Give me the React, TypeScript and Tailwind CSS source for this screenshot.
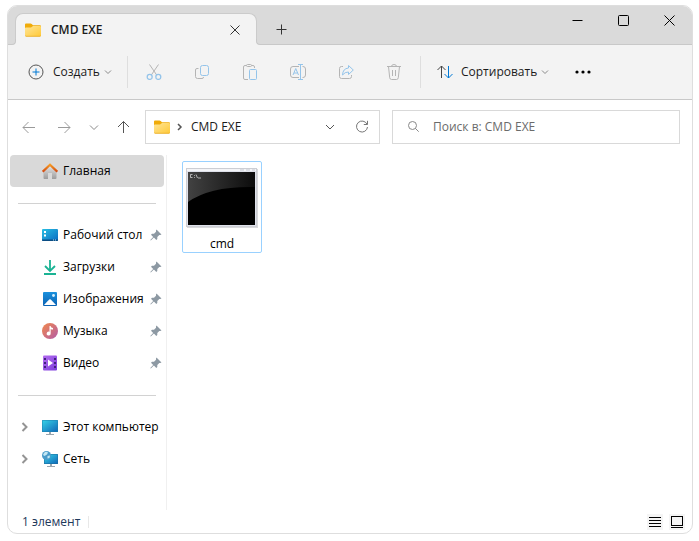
import { ReactNode } from "react"

const font = "font-['Open_Sans','Noto_Sans',sans-serif]"

function Folder() {
  return (
    <svg width="16" height="14" viewBox="0 0 16 14" className="shrink-0">
      <defs>
        <linearGradient id="folder" x1="0" y1="0" x2="1" y2="1">
          <stop offset="0" stopColor="#ffe597" />
          <stop offset="1" stopColor="#ffc937" />
        </linearGradient>
      </defs>
      <path d="M0 1.500Q0 .5 1 .5H5.500Q6.200 .5 6.700 1L8 2.200H15Q16 2.200 16 3.200V6H0Z" fill="#f0ab09" />
      <path d="M0 5Q0 4.500 1 4.500H6L8 3H15Q16 3 16 4V12.500Q16 13.500 15 13.500H1Q0 13.500 0 12.500Z" fill="url(#folder)" />
      <path d="M.3 12.700Q.6 13.300 1.200 13.300H14.800Q15.500 13.300 15.700 12.700" fill="none" stroke="#e5a315" strokeWidth="0.7" />
    </svg>
  )
}

type IconProps = { children: ReactNode; size?: number; color?: string; width?: number }

function Line({ children, size = 16, color = "#b4b4b4", width = 1 }: IconProps) {
  return (
    <svg width={size} height={size} viewBox={`0 0 ${size} ${size}`} fill="none" stroke={color} strokeWidth={width} className="shrink-0">
      {children}
    </svg>
  )
}

function Chevron({ color = "#8a8a8a" }: { color?: string }) {
  return <Line size={8} color={color}><path d="M1 2.500L4 5.500L7 2.500" /></Line>
}

const actions = [
  {
    name: "Вырезать",
    icon: <>
      <path d="M3.500 .5L10.700 11M12.500 .5L5.300 11" />
      <g stroke="#94c4ea" strokeWidth="1.3"><circle cx="3.700" cy="12.900" r="2.500" /><circle cx="12.300" cy="12.900" r="2.500" /></g>
    </>,
  },
  {
    name: "Копировать",
    icon: <>
      <path d="M4.500 4.500H3Q1.500 4.500 1.500 6V12.500Q1.500 14.500 3.500 14.500H8Q9.500 14.500 9.500 13" />
      <rect x="6.500" y="1.500" width="8" height="10" rx="2" stroke="#94c4ea" />
    </>,
  },
  {
    name: "Вставить",
    icon: <>
      <path d="M6 15.500H3Q1.500 15.500 1.500 14V3Q1.500 1.500 3 1.500H4.500M9.500 1.500H11Q12.500 1.500 12.500 3V4" />
      <rect x="4.500" y=".5" width="5" height="2" rx="1" />
      <rect x="7.500" y="5.500" width="7" height="10" rx="1" stroke="#94c4ea" />
    </>,
  },
  {
    name: "Переименовать",
    icon: <>
      <path d="M9 2.500H3Q.5 2.500 .5 5V11Q.5 13.500 3 13.500H9M12.500 2.500H13Q15.500 2.500 15.500 5V11Q15.500 13.500 13 13.500H12.500" />
      <g stroke="#94c4ea"><path d="M3 11L5.750 4.500L8.500 11M4 9H7.500" /><path d="M8 .5H13M8 15.500H13M10.500 .5V15.500" /></g>
    </>,
  },
  {
    name: "Поделиться",
    icon: <>
      <path d="M5 2.500H3.500Q1.500 2.500 1.500 4.500V12.500Q1.500 14.500 3.500 14.500H11.500Q13.500 14.500 13.500 12.500V11" />
      <path d="M10.500 1.500L15.300 6L10.500 10.500V8Q7 7.800 4.500 11Q4.800 4.500 10.500 4Z" stroke="#94c4ea" strokeLinejoin="round" />
    </>,
  },
  {
    name: "Удалить",
    icon: <>
      <path d="M1 2.500H15M5.500 2.500Q5.500 .5 8 .5Q10.500 .5 10.500 2.500M2.500 2.500L3.700 13.700Q3.900 15.500 5.500 15.500H10.500Q12.100 15.500 12.300 13.700L13.500 2.500" />
      <path d="M6.500 6V12M9.500 6V12" />
    </>,
  },
]

const pinned = [
  {
    name: "Рабочий стол",
    icon: <>
      <defs>
        <linearGradient id="desk" x1="0" y1="0" x2="1" y2="1">
          <stop offset="0" stopColor="#28bfe3" />
          <stop offset="1" stopColor="#0c6bc2" />
        </linearGradient>
      </defs>
      <rect y="2" width="16" height="12" rx="1" fill="url(#desk)" />
      <path d="M0 12.500H16V13Q16 14 15 14H1Q0 14 0 13Z" fill="#0b4d83" />
      <path d="M2 4H4V6H2ZM2 7.500H4V9.500H2Z" fill="#fff" />
      <path d="M11 12.500H12V13.500H11ZM13 12.500H14V13.500H13Z" fill="#b7e4f7" />
    </>,
  },
  {
    name: "Загрузки",
    icon: <path d="M8 1V12M3 7L8 12L13 7M2 15H14" fill="none" stroke="#1bb394" strokeWidth="1.8" />,
  },
  {
    name: "Изображения",
    icon: <>
      <defs>
        <linearGradient id="pic" x1="0" y1="0" x2="0" y2="1">
          <stop offset="0" stopColor="#1b91dd" />
          <stop offset="1" stopColor="#0b62b3" />
        </linearGradient>
      </defs>
      <rect x="1" y="1" width="14" height="14" rx="1" fill="url(#pic)" />
      <path d="M2 14L7.200 8.500Q8 7.800 8.800 8.500L14 14Z" fill="#fff" />
      <circle cx="11.500" cy="4.500" r="1.400" fill="#d9f2ff" />
    </>,
  },
  {
    name: "Музыка",
    icon: <>
      <defs>
        <linearGradient id="music" x1="0" y1="0" x2="1" y2="1">
          <stop offset="0" stopColor="#f2894b" />
          <stop offset="1" stopColor="#b25ba8" />
        </linearGradient>
      </defs>
      <circle cx="8" cy="8" r="8" fill="url(#music)" />
      <path d="M7.500 3H8.500Q9 5 11 5V6.600Q9.500 6.600 8.700 5.900V10.500A2 2 0 1 1 7.500 8.700Z" fill="#fff" />
    </>,
  },
  {
    name: "Видео",
    icon: <>
      <defs>
        <linearGradient id="video" x1="0" y1="0" x2="1" y2="1">
          <stop offset="0" stopColor="#b56df0" />
          <stop offset="1" stopColor="#7b3ddb" />
        </linearGradient>
      </defs>
      <rect x="1" y="0.500" width="14" height="15" rx="1" fill="url(#video)" />
      <path d="M2 3H4V5H2ZM2 7H4V9H2ZM2 11H4V13H2ZM12 3H14V5H12ZM12 7H14V9H12ZM12 11H14V13H12Z" fill="#41217f" />
      <path d="M6 4.500L11 8L6 11.500Z" fill="#fff" />
    </>,
  },
]

const places = [
  {
    name: "Этот компьютер",
    icon: <>
      <defs>
        <linearGradient id="screen" x1="0" y1="0" x2="1" y2="1">
          <stop offset="0" stopColor="#35d2e6" />
          <stop offset="1" stopColor="#1168b8" />
        </linearGradient>
      </defs>
      <rect y="1" width="16" height="12" rx="0.500" fill="#1b7fae" />
      <rect x="0.500" y="1.500" width="15" height="11" fill="url(#screen)" />
      <path d="M7 13H9V15H12V16H4V15H7Z" fill="#9aa5ae" />
    </>,
  },
  {
    name: "Сеть",
    icon: <>
      <rect x="2" y="3" width="14" height="10" rx="0.500" fill="#1b6b9c" />
      <rect x="2.500" y="3.500" width="13" height="9" fill="url(#screen)" />
      <path d="M8 13H10V15H13V16H5V15H8Z" fill="#9aa5ae" />
      <circle cx="4.500" cy="4.500" r="4.500" fill="#4a9bc9" />
      <path d="M2 2Q4 0 6 1.500L5 3.500L2.500 5L1 4ZM5.500 5L8 4.500L7.500 7L5.500 7.500Z" fill="#c3e6f2" />
    </>,
  },
]

function Pin() {
  return (
    <svg width="12" height="12" viewBox="0 0 12 12" className="absolute right-0.5 fill-[#8d99a3]">
      <path d="M6.500 .5L11.500 5.500L10.300 6L9.300 6L7.300 8V10L6.300 11L3.900 8.600L.8 11.500L.3 11L3.200 7.900L1 5.700L2 4.700H4L6 2.700V1.500Z" />
    </svg>
  )
}

type RowProps = { name: string; icon: ReactNode; pin?: boolean; expand?: boolean; active?: boolean }

function Row({ name, icon, pin, expand, active }: RowProps) {
  return (
    <li>
      <button
        className={`relative flex h-8 w-full items-center gap-[5px] rounded-sm pl-8 text-left whitespace-nowrap text-black ${active ? "bg-[#d9d9d9]" : "hover:bg-gray-100"}`}
      >
        {expand && (
          <svg width="8" height="10" viewBox="0 0 8 10" className="absolute left-[11px] fill-none stroke-[#949494] stroke-2">
            <path d="M1.500 1L5.500 5L1.500 9" />
          </svg>
        )}
        <svg width="16" height="16" viewBox="0 0 16 16" className="shrink-0">{icon}</svg>
        {name}
        {pin && <Pin />}
      </button>
    </li>
  )
}

function CmdIcon() {
  return (
    <svg width="72" height="60" viewBox="0 0 72 60">
      <defs>
        <linearGradient id="gloss" x1="0" y1="0" x2="1" y2="0">
          <stop offset="0" stopColor="#424242" />
          <stop offset="1" stopColor="#0c0c0c" />
        </linearGradient>
      </defs>
      <rect x="1" y="1" width="71" height="59" fill="#d9d9dc" />
      <rect x="0.500" y="0.500" width="70" height="58" fill="#dfe1ea" stroke="#ccced4" />
      <rect x="1" y="1" width="69" height="2" fill="#f4f5f8" />
      <path d="M54 2H58M60 2H64M66 2H69" stroke="#c3c7d1" />
      <rect x="2" y="4" width="67" height="53" fill="#000" />
      <path d="M2 4H69V19Q24 18 2 34Z" fill="url(#gloss)" />
      <g fill="none" stroke="#d0d0d0" strokeWidth="0.8">
        <path d="M6.500 6.500H4.500V9.500H6.500M8.500 7V7.800M8.500 9V9.800M10 6.500L11.500 10M12 10H15" />
      </g>
    </svg>
  )
}

export default function App() {
  return (
    <div className={`flex min-h-screen bg-white pt-[5px] pr-1.5 pb-[7px] pl-[7px] text-xs text-[#1b1b1b] ${font}`}>
      <div className="flex min-w-0 flex-1 flex-col overflow-hidden rounded-[10px] border border-[#dedede] bg-white">

        <header className="flex h-[39px] shrink-0 border-b border-[#c8c8c8] bg-[#dadada]">
          <div className="relative mt-[7px] -mb-px ml-[7px] flex w-[242px] items-center rounded-t-lg border border-b-0 border-[#cbcbcb] bg-[#f3f3f3] pr-4 pl-[9px]">
            <Folder />
            <span className="ml-2.5 font-semibold">CMD EXE</span>
            <button aria-label="Закрыть вкладку" className="ml-auto">
              <Line size={10} color="#333"><path d="M.5 .5L9.500 9.500M9.500 .5L.5 9.500" /></Line>
            </button>
            <span className="absolute bottom-0 -left-1.5 size-1.5 bg-[#f3f3f3]">
              <span className="block size-1.5 rounded-br-sm border-r border-b border-[#c8c8c8] bg-[#dadada]" />
            </span>
            <span className="absolute -right-1.5 bottom-0 size-1.5 bg-[#f3f3f3]">
              <span className="block size-1.5 rounded-bl-sm border-b border-l border-[#c8c8c8] bg-[#dadada]" />
            </span>
          </div>
          <button aria-label="Новая вкладка" className="mt-2 ml-2 flex w-8 items-center justify-center">
            <Line size={11} color="#333"><path d="M5.500 .5V10.500M.5 5.500H10.500" /></Line>
          </button>
          <div className="ml-auto flex h-7">
            <button aria-label="Свернуть" className="flex w-[45px] items-center justify-center">
              <Line size={11} color="#000"><path d="M.5 5.500H10.500" /></Line>
            </button>
            <button aria-label="Развернуть" className="flex w-[46px] items-center justify-center">
              <Line size={11} color="#000"><rect x=".5" y=".5" width="10" height="10" rx="1" /></Line>
            </button>
            <button aria-label="Закрыть" className="flex w-[46px] items-center justify-center">
              <Line size={11} color="#000"><path d="M.5 .5L10.500 10.500M10.500 .5L.5 10.500" /></Line>
            </button>
          </div>
        </header>

        <div className="flex h-[55px] shrink-0 items-center border-b border-[#c8c8c8] bg-[#f3f3f3]">
          <button className="flex h-8 w-[119px] items-center pl-5">
            <Line color="#555">
              <circle cx="8" cy="8" r="7" />
              <path d="M8 4.500V11.500M4.500 8H11.500" stroke="#0078d4" />
            </Line>
            <span className="mr-1 ml-[9px]">Создать</span>
            <Chevron />
          </button>
          <span className="mr-0.5 h-8 w-px bg-[#dedede]" />
          {actions.map((action) => (
            <button key={action.name} aria-label={action.name} className="flex h-8 w-12 items-center justify-center">
              <Line>{action.icon}</Line>
            </button>
          ))}
          <span className="ml-0.5 h-8 w-px bg-[#dedede]" />
          <button className="flex h-8 w-[138px] items-center pl-4">
            <Line color="#444">
              <path d="M4.500 14V2M.5 6L4.500 2L8.500 6" />
              <path d="M11.500 2V14M7.500 10L11.500 14L15.500 10" stroke="#0078d4" />
            </Line>
            <span className="mr-1 ml-2">Сортировать</span>
            <Chevron />
          </button>
          <button aria-label="Ещё" className="flex h-8 w-12 items-center justify-center">
            <svg width="16" height="4" viewBox="0 0 16 4" className="fill-black">
              <circle cx="2" cy="2" r="1.600" /><circle cx="8" cy="2" r="1.600" /><circle cx="14" cy="2" r="1.600" />
            </svg>
          </button>
        </div>

        <div className="flex h-[55px] shrink-0 items-center pr-3 pb-0.5 pl-[14px]">
          <button aria-label="Назад" className="mr-[21px]">
            <Line size={14} color="#9a9a9a"><path d="M13 7.500H1M6.500 2L1 7.500L6.500 13" /></Line>
          </button>
          <button aria-label="Вперёд" className="mr-[18px]">
            <Line size={14} color="#9a9a9a"><path d="M1 7.500H13M7.500 2L13 7.500L7.500 13" /></Line>
          </button>
          <button aria-label="Недавние расположения" className="mr-[18px]">
            <Line size={10} color="#8a8a8a"><path d="M1 3.500L5 7.500L9 3.500" /></Line>
          </button>
          <button aria-label="Вверх" className="mr-[14px]">
            <Line size={14} color="#555"><path d="M6.500 13V1.500M1 7L6.500 1.500L12 7" /></Line>
          </button>

          <div className="grid flex-1 grid-cols-[235fr_288fr] gap-3">
            <div className="flex h-[34px] items-center border border-[#d9d9d9] pr-2.5 pl-2">
              <Folder />
              <svg width="6" height="8" viewBox="0 0 6 8" className="mr-2 ml-[7px] fill-none stroke-[#555]" strokeWidth="1.5">
                <path d="M1 1L4 4L1 7" />
              </svg>
              <button>CMD EXE</button>
              <button aria-label="Предыдущие расположения" className="mr-5 ml-auto">
                <Line size={10} color="#555"><path d="M1 3L5 7L9 3" /></Line>
              </button>
              <button aria-label="Обновить">
                <Line size={14} color="#777"><path d="M12 4.200A5.500 5.500 0 1 0 12.500 7M12.500 .8V4.500H8.800" /></Line>
              </button>
            </div>

            <label className="flex h-[34px] items-center border border-[#d9d9d9] pl-[15px]">
              <Line size={11} color="#888"><circle cx="4.500" cy="4.500" r="4" /><path d="M7.300 7.300L10.700 10.700" /></Line>
              <input
                type="search"
                aria-label="Поиск"
                placeholder="Поиск в: CMD EXE"
                className="ml-[14px] min-w-0 flex-1 outline-none placeholder:text-[#6b6b6b]"
              />
            </label>
          </div>
        </div>

        <div className="flex flex-1">
          <nav className="ml-0.5 w-[157px] shrink-0 border-r border-[#f0f0f0] pr-0.5">
            <ul>
              <Row
                active
                name="Главная"
                icon={<>
                  <defs>
                    <linearGradient id="walls" x1="0" y1="0" x2="0" y2="1">
                      <stop offset="0" stopColor="#e8e8e8" />
                      <stop offset="1" stopColor="#9c9c9c" />
                    </linearGradient>
                    <linearGradient id="roof" x1="0" y1="0" x2="0" y2="1">
                      <stop offset="0" stopColor="#f59a23" />
                      <stop offset="1" stopColor="#d24a12" />
                    </linearGradient>
                  </defs>
                  <path d="M1.500 8L8 2L14.500 8V15Q14.500 16 13.500 16H10V10H6V16H2.500Q1.500 16 1.500 15Z" fill="url(#walls)" />
                  <path d="M.7 8.700L8 1.700L15.300 8.700" fill="none" stroke="url(#roof)" strokeWidth="2.200" />
                </>}
              />
            </ul>
            <hr className="mx-2 mt-4 mb-[15px] border-[#d2d2d2]" />
            <ul>
              {pinned.map((item) => <Row key={item.name} {...item} pin />)}
            </ul>
            <hr className="mx-2 mt-4 mb-[15px] border-[#d2d2d2]" />
            <ul>
              {places.map((item) => <Row key={item.name} {...item} expand />)}
            </ul>
          </nav>

          <main className="flex-1 pt-1.5 pl-[15px]">
            <button className="flex h-[92px] w-20 flex-col items-center rounded-xs border border-[#99d1ff] pt-1.5 text-black">
              <CmdIcon />
              <span className="mt-2">cmd</span>
            </button>
          </main>
        </div>

        <footer className="flex h-[23px] shrink-0 items-center pr-[7px] pl-[14px]">
          <span className="text-[#1e395b]">1 элемент</span>
          <span className="ml-2 h-3 w-px bg-[#e8e8e8]" />
          <button aria-label="Таблица" className="mr-1.5 ml-auto flex size-4 items-center justify-center bg-[#f5f5f5]">
            <Line size={12} color="#000"><path d="M0 1.500H12M0 4.500H12M0 7.500H12M0 10.500H12" /></Line>
          </button>
          <button aria-label="Крупные значки" className="flex size-4 items-center justify-center bg-[#f5f5f5]">
            <Line size={12} color="#000"><rect x=".5" y=".5" width="11" height="9" /><path d="M0 11.500H12" /></Line>
          </button>
        </footer>

      </div>
    </div>
  )
}
